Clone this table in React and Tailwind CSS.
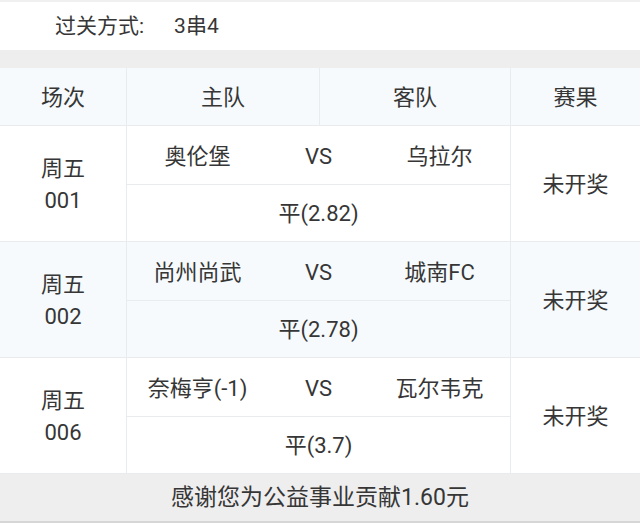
import React from "react";

const matches = [
  { no: "001", home: "奥伦堡", away: "乌拉尔", odds: "平(2.82)", tint: false },
  { no: "002", home: "尚州尚武", away: "城南FC", odds: "平(2.78)", tint: true },
  { no: "006", home: "奈梅亨(-1)", away: "瓦尔韦克", odds: "平(3.7)", tint: false },
];

const App = () => {
  return (
    <div
      className="w-[640px] h-[523px] bg-white text-[#363636] overflow-hidden flex flex-col"
      style={{ fontFamily: "Roboto, 'Noto Sans CJK SC', sans-serif" }}
    >
      {/* Pass type */}
      <div className="h-[50px] shrink-0 border-t-2 border-[#f0f0f0] flex items-center pl-[55px] pt-[2px] text-[21px]">
        <span>过关方式:</span>
        <span className="ml-[30px]">3串4</span>
      </div>
      <div className="h-[18px] shrink-0 bg-[#eeeeee]" />

      {/* Table header */}
      <div className="h-[58px] shrink-0 flex bg-[#f6fafd] border-b border-[#e8ecef] text-[22px]">
        <div className="w-[127px] flex items-center justify-center pt-[2px] border-r border-[#e8ecef]">场次</div>
        <div className="w-[193px] flex items-center justify-center pt-[2px] border-r border-[#e8ecef]">主队</div>
        <div className="w-[191px] flex items-center justify-center pt-[2px] border-r border-[#e8ecef]">客队</div>
        <div className="flex-1 flex items-center justify-center pt-[2px]">赛果</div>
      </div>

      {/* Rows */}
      {matches.map((m) => (
        <div
          key={m.no}
          className={`h-[116px] shrink-0 flex border-b border-[#e8ecef] text-[22px] ${m.tint ? "bg-[#f6fafd]" : "bg-white"}`}
        >
          <div className="w-[127px] flex flex-col items-center justify-center pt-[3px] leading-[32px] border-r border-[#e8ecef]">
            <span>周五</span>
            <span>{m.no}</span>
          </div>
          <div className="w-[384px] flex flex-col border-r border-[#e8ecef]">
            <div className="flex-1 grid grid-cols-3 items-center px-[10px] pt-[3px] border-b border-[#e8ecef]">
              <span className="text-center">{m.home}</span>
              <span className="text-center">VS</span>
              <span className="text-center">{m.away}</span>
            </div>
            <div className="flex-1 flex items-center justify-center pt-[2px]">{m.odds}</div>
          </div>
          <div className="flex-1 flex items-center justify-center pt-[2px]">未开奖</div>
        </div>
      ))}

      {/* Footer */}
      <div className="flex-1 bg-[#eeeeee] border-b-2 border-[#d6d6d6] flex items-center justify-center pt-[2px] text-[23px]">
        感谢您为公益事业贡献1.60元
      </div>
    </div>
  );
};

export default App;
